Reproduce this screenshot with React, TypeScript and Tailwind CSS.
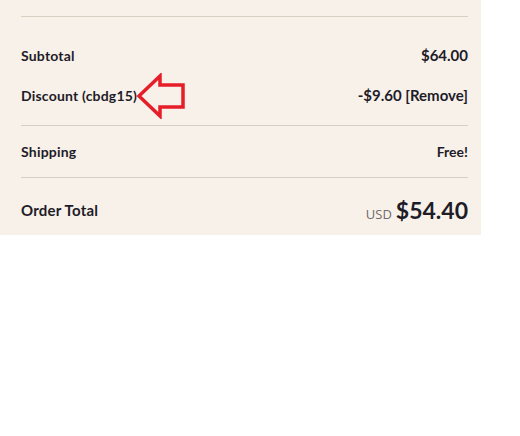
import React from "react";

function Row({ label, value, valueSize = "text-[14px]", children }: { label: React.ReactNode; value: React.ReactNode; valueSize?: string; children?: React.ReactNode }) {
  return (
    <div className="flex items-center justify-between h-[20px]">
      <div className="flex items-center">
        <span className="text-[14px] font-bold tracking-[0.2px]">{label}</span>
        {children}
      </div>
      <span className={`${valueSize} font-bold`}>{value}</span>
    </div>
  );
}

function Arrow() {
  return (
    <svg width="50" height="46" viewBox="0 0 50 46">
      <path
        d="M3 23 L24 3 L24 12 L47 12 L47 34 L24 34 L24 43 Z"
        fill="none"
        stroke="#e61e29"
        strokeWidth="3.5"
        strokeLinejoin="miter"
      />
    </svg>
  );
}

export default function App() {
  return (
    <div className="w-[520px] h-[436px] bg-white" style={{ fontFamily: "Lato, 'Liberation Sans', sans-serif" }}>
      <div className="w-[481px] h-[235px] bg-[#f8f1ea] pl-[21px] pr-[13px] pt-[16px] text-[#1e1c28]">
        <div className="border-t border-[#dacfc3]" />
        <div className="pt-[28px] pb-[20px] flex flex-col gap-[20px]">
          <Row label="Subtotal" value="$64.00" valueSize="text-[15px]" />
          <Row label="Discount (cbdg15)" value="-$9.60 [Remove]" valueSize="text-[15px]">
            <div className="h-[20px] relative w-0">
              <div className="absolute left-[-1px] top-[-12px]">
                <Arrow />
              </div>
            </div>
          </Row>
        </div>
        <div className="border-t border-[#d6cec7]" />
        <div className="pt-[15px] pb-[16px]">
          <Row label="Shipping" value="Free!" />
        </div>
        <div className="border-t border-[#d6cec7]" />
        <div className="pt-[17px] flex items-center justify-between h-[47px]">
          <span className="text-[15px] font-bold tracking-[0.2px]">Order Total</span>
          <div className="flex items-baseline gap-[4px]">
            <span className="text-[13px] text-[#6f6b6b]" style={{ fontFamily: "'Open Sans', sans-serif" }}>USD</span>
            <span className="text-[23px] font-bold">$54.40</span>
          </div>
        </div>
      </div>
    </div>
  );
}
